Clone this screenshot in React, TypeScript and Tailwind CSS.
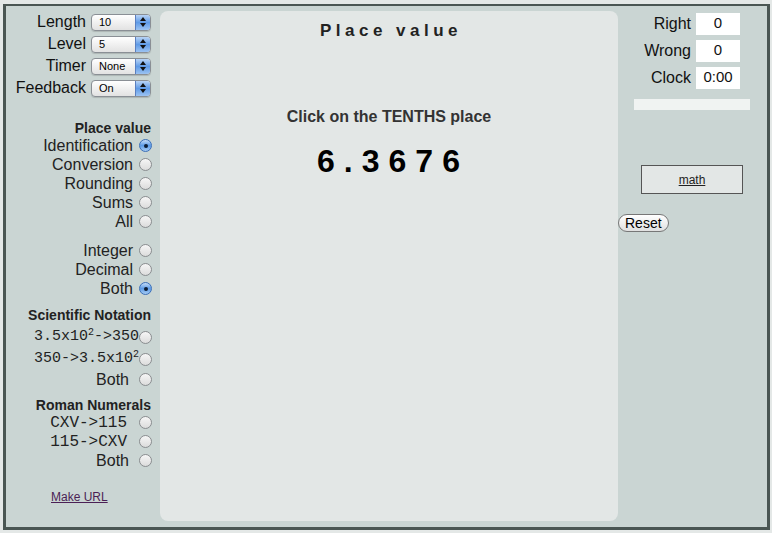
import React from 'react';

const sans = { fontFamily: '"Liberation Sans", Arial, sans-serif' };
const mono = { fontFamily: '"Liberation Mono", "Courier New", monospace' };

function Select({ value }: { value: string }) {
  return (
    <div className="flex h-[17px] w-[60px] overflow-hidden rounded-[4px] border border-[#8a8f95] bg-gradient-to-b from-white to-[#e2e2e2] shadow-[0_1px_1px_rgba(0,0,0,0.15)]">
      <div className="flex flex-1 items-center pl-[7px] text-[11px] leading-none text-black">{value}</div>
      <div className="flex w-[15px] flex-col items-center justify-center gap-[2px] border-l border-[#5a7fc0] bg-gradient-to-b from-[#b9d4f5] via-[#5f9ae6] to-[#9cc3f2]">
        <svg width="6" height="4" viewBox="0 0 6 4"><path d="M3 0 L6 4 L0 4 Z" fill="#111" /></svg>
        <svg width="6" height="4" viewBox="0 0 6 4"><path d="M0 0 L6 0 L3 4 Z" fill="#111" /></svg>
      </div>
    </div>
  );
}

function Radio({ on }: { on?: boolean }) {
  if (on) {
    return (
      <span className="flex h-[13px] w-[13px] shrink-0 items-center justify-center rounded-full border border-[#3b6fb8] bg-gradient-to-b from-[#c6ddf7] via-[#5c9be6] to-[#a5cbf3]">
        <span className="h-[4px] w-[4px] rounded-full bg-[#0d1d33]" />
      </span>
    );
  }
  return <span className="h-[13px] w-[13px] shrink-0 rounded-full border border-[#8a8d90] bg-gradient-to-b from-[#f6f6f6] to-[#dcdcdc]" />;
}

function Opt({ label, on, m }: { label: React.ReactNode; on?: boolean; m?: boolean }) {
  return (
    <div className="mr-[-1px] flex h-[19px] items-center justify-end gap-[6px]">
      <span className="text-[16px] text-[#222]" style={m ? mono : sans}>
        {label}
      </span>
      <Radio on={on} />
    </div>
  );
}

function Head({ children }: { children: React.ReactNode }) {
  return <div className="text-right text-[14px] font-bold leading-[15px] text-[#222]">{children}</div>;
}

function Setting({ label, value }: { label: string; value: string }) {
  return (
    <div className="flex h-[22px] items-center justify-end gap-[5px]">
      <span className="text-[16px] text-[#111]">{label}</span>
      <Select value={value} />
    </div>
  );
}

function Score({ label, value }: { label: string; value: string }) {
  return (
    <div className="flex h-[27px] items-center justify-end gap-[5px]">
      <span className="text-[16px] text-[#111]">{label}</span>
      <div className="flex h-[22px] w-[44px] items-center justify-center bg-white text-[15px] text-[#111]">{value}</div>
    </div>
  );
}

export default function App() {
  return (
    <div className="h-[533px] w-[772px] bg-[#e4e8e7] pl-[3px] pt-[4px]" style={sans}>
      <div className="flex h-[526px] w-[767px] border-[3px] border-t-2 border-[#4a5653] bg-[#cad5d3]">
        {/* left column */}
        <div className="flex w-[154px] flex-col pr-[9px] pt-[5px]">
          <Setting label="Length" value="10" />
          <Setting label="Level" value="5" />
          <Setting label="Timer" value="None" />
          <Setting label="Feedback" value="On" />

          <div className="mt-[22px]">
            <Head>Place value</Head>
            <Opt label="Identification" on />
            <Opt label="Conversion" />
            <Opt label="Rounding" />
            <Opt label="Sums" />
            <Opt label="All" />
          </div>
          <div className="mt-[10px]">
            <Opt label="Integer" />
            <Opt label="Decimal" />
            <Opt label="Both" on />
          </div>

          <div className="mt-[10px]">
            <Head>Scientific Notation</Head>
            <div className="mr-[-1px] mt-[3px] flex h-[22px] items-center justify-end">
              <span className="text-[15px] text-[#222]" style={mono}>
                3.5x10<sup className="text-[10px]">2</sup>-&gt;350
              </span>
              <Radio />
            </div>
            <div className="mr-[-1px] flex h-[22px] items-center justify-end">
              <span className="text-[15px] text-[#222]" style={mono}>
                350-&gt;3.5x10<sup className="text-[10px]">2</sup>
              </span>
              <Radio />
            </div>
            <Opt label={<span className="pr-[4px]">Both</span>} />
          </div>

          <div className="mt-[9px]">
            <Head>Roman Numerals</Head>
            <Opt label={<span className="pr-[6px]">CXV-&gt;115</span>} m />
            <Opt label={<span className="pr-[6px]">115-&gt;CXV</span>} m />
            <Opt label={<span className="pr-[4px]">Both</span>} />
          </div>

          <div className="mt-[14px] pl-[45px]">
            <a href="#" className="text-[12px] text-[#4b1f55] underline">Make URL</a>
          </div>
        </div>

        {/* center panel */}
        <div className="mt-[5px] flex h-[510px] w-[458px] flex-col items-center rounded-[8px] bg-[#e3e7e6]">
          <div className="mt-[7px] pl-[4px] text-[17px] font-bold tracking-[4.5px] text-[#222]">Place value</div>
          <div className="mt-[61px] text-[16px] font-bold text-[#333]">Click on the TENTHS place</div>
          <div className="mt-[14px] pl-[8px] text-[32px] font-bold leading-[36px] tracking-[9px] text-black">6.3676</div>
        </div>

        {/* right column */}
        <div className="flex flex-1 flex-col">
          <div className="pr-[27px] pt-[4px]">
            <Score label="Right" value="0" />
            <Score label="Wrong" value="0" />
            <Score label="Clock" value="0:00" />
          </div>
          <div className="ml-[16px] mt-[8px] h-[11px] w-[116px] bg-[#f0f3f2]" />
          <div className="ml-[23px] mt-[55px] flex h-[29px] w-[102px] items-center justify-center border border-[#555] bg-[#e3e7e6]">
            <a href="#" className="text-[12px] text-[#222] underline">math</a>
          </div>
          <div className="mt-[17px]">
            <button className="h-[18px] rounded-full border border-[#777] bg-gradient-to-b from-white to-[#e0e0e0] px-[6px] text-[14px] leading-none text-black">
              Reset
            </button>
          </div>
        </div>
      </div>
    </div>
  );
}
